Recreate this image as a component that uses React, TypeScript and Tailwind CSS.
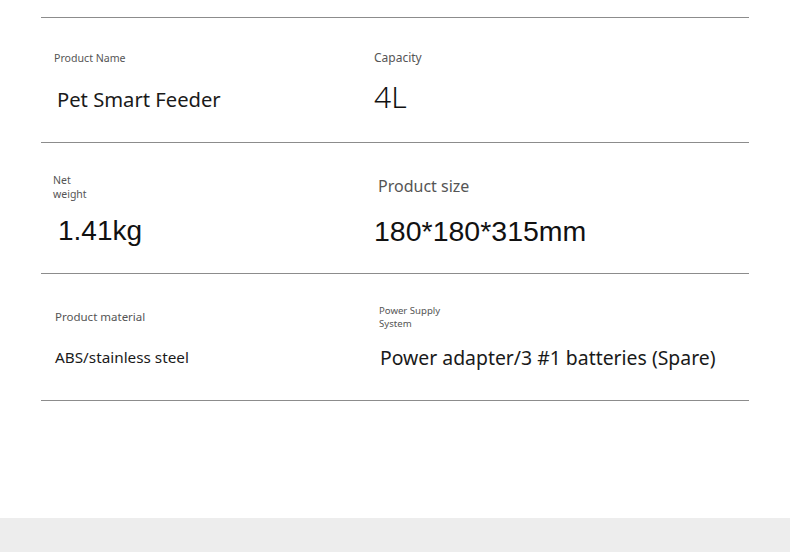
import React from "react";

const sans = "font-['Noto_Sans','Open_Sans',sans-serif]";
const arial = "font-['Liberation_Sans',Arial,sans-serif]";

export default function App() {
  return (
    <div className="flex h-[552px] w-[790px] flex-col bg-white">
      <div className="flex-1 pt-[17px]">
        <div className="mx-[41px] border-t border-[#8c8c8c]">
          {/* Row 1 */}
          <div className="grid h-[125px] grid-cols-[330px_1fr] border-b border-[#8c8c8c]">
            <div className={`flex flex-col pl-[13px] pt-[33px] ${sans}`}>
              <div className="text-[10.6px] leading-[14px] text-[#555]">Product Name</div>
              <div className="mt-[20px] pl-[3px] text-[20.2px] leading-[28px] text-[#1a1a1a]">Pet Smart Feeder</div>
            </div>
            <div className={`flex flex-col pl-[3px] pt-[32px] ${sans}`}>
              <div className="text-[12px] leading-[16px] text-[#555]">Capacity</div>
              <div className="mt-[14px] text-[30px] font-light leading-[34px] text-[#111]">4L</div>
            </div>
          </div>
          {/* Row 2 */}
          <div className="grid h-[131px] grid-cols-[330px_1fr] border-b border-[#8c8c8c]">
            <div className="flex flex-col pl-[12px] pt-[31px]">
              <div className={`flex flex-col text-[10.5px] leading-[13.5px] text-[#555] ${sans}`}>
                <span>Net</span>
                <span>weight</span>
              </div>
              <div className={`mt-[14px] pl-[5px] text-[28px] leading-[32px] text-[#111] ${arial}`}>1.41kg</div>
            </div>
            <div className="flex flex-col pt-[33px]">
              <div className={`pl-[7px] text-[16px] leading-[20px] text-[#555] ${sans}`}>Product size</div>
              <div className={`mt-[19px] pl-[3px] text-[28.5px] leading-[32px] text-[#111] ${arial}`}>180*180*315mm</div>
            </div>
          </div>
          {/* Row 3 */}
          <div className="grid h-[127px] grid-cols-[330px_1fr] border-b border-[#8c8c8c]">
            <div className={`flex flex-col pl-[14px] pt-[35px] ${sans}`}>
              <div className="text-[11.5px] leading-[15px] text-[#555]">Product material</div>
              <div className="mt-[23px] text-[15.3px] leading-[20px] text-[#1a1a1a]">ABS/stainless steel</div>
            </div>
            <div className={`flex flex-col pl-[8px] pt-[31px] ${sans}`}>
              <div className="flex flex-col text-[9.6px] leading-[12.5px] text-[#555]">
                <span>Power Supply</span>
                <span>System</span>
              </div>
              <div className="mt-[15px] pl-[1px] text-[19.4px] leading-[26px] text-[#1a1a1a]">Power adapter/3 #1 batteries (Spare)</div>
            </div>
          </div>
        </div>
      </div>
      <div className="h-[34px] bg-[#ededed]" />
    </div>
  );
}
